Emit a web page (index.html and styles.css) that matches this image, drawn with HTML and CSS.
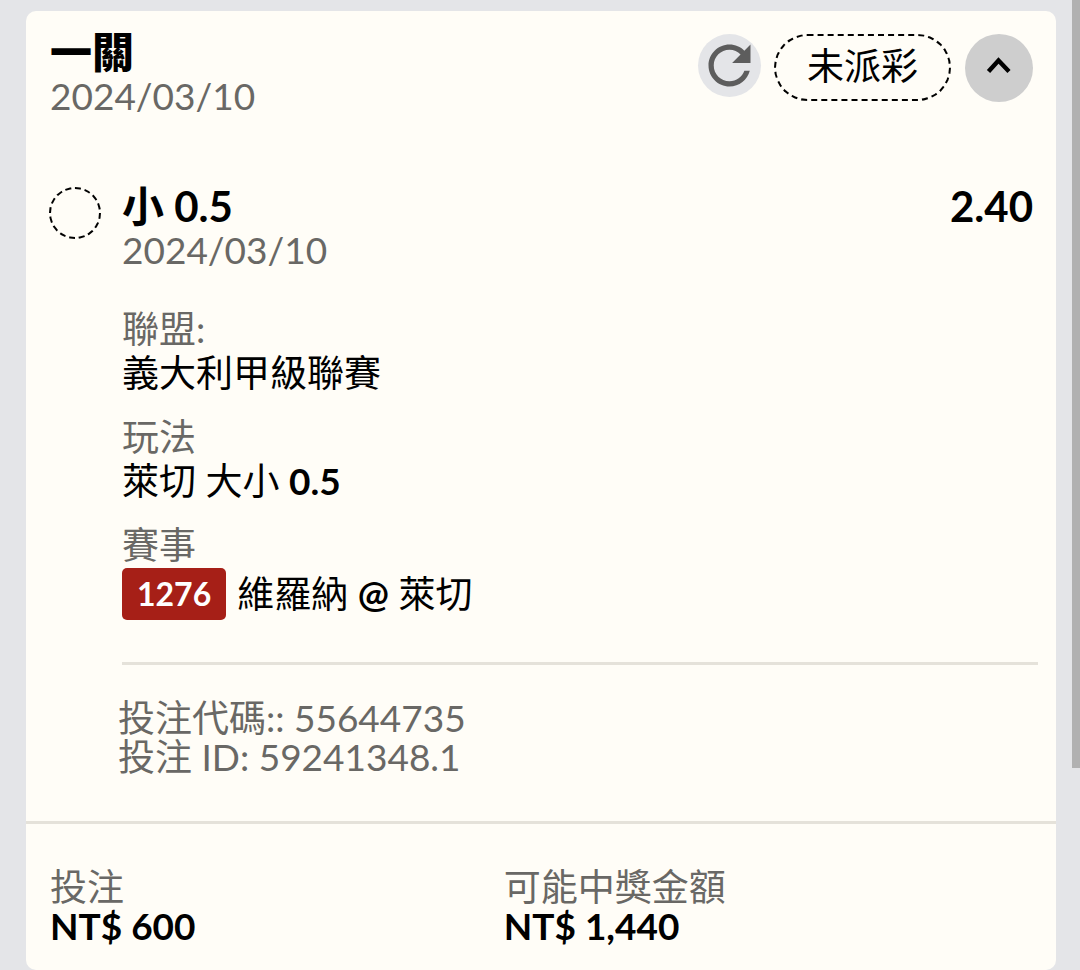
FILE: index.html
```html
<!DOCTYPE html>
<html lang="zh-Hant">
<head>
<meta charset="utf-8">
<meta name="viewport" content="width=device-width, initial-scale=1">
<title>一關</title>
<link rel="stylesheet" href="styles.css">
</head>
<body>
<main class="page">
  <article class="card">
    <header class="card-header">
      <div>
        <h1 class="card-title">一關</h1>
        <time class="date" datetime="2024-03-10">2024/03/10</time>
      </div>
      <div class="actions">
        <button class="refresh" type="button" aria-label="重新整理">
          <svg viewBox="0 0 24 24" width="63" height="63" aria-hidden="true">
            <path fill="#5d5d5d" d="M17.65 6.35C16.2 4.9 14.21 4 12 4c-4.42 0-7.99 3.58-7.99 8s3.57 8 7.99 8c3.73 0 6.84-2.55 7.73-6h-2.08c-.82 2.33-3.04 4-5.65 4-3.31 0-6-2.69-6-6s2.69-6 6-6c1.66 0 3.14.69 4.22 1.78L13 11h7V4l-2.35 2.35z"/>
          </svg>
        </button>
        <span class="status">未派彩</span>
        <button class="toggle" type="button" aria-label="收合" aria-expanded="true">
          <svg viewBox="0 0 68 68" width="68" height="68" aria-hidden="true">
            <path d="M23.5 37.5L33.5 26.5L44 37.5" fill="none" stroke="#000" stroke-width="4.4"/>
          </svg>
        </button>
      </div>
    </header>
    <section class="bet">
      <span class="marker"></span>
      <div class="bet-body">
        <div class="pick"><h2>小 0.5</h2><strong>2.40</strong></div>
        <time class="date" datetime="2024-03-10">2024/03/10</time>
        <dl class="details">
          <div><dt>聯盟:</dt><dd>義大利甲級聯賽</dd></div>
          <div><dt>玩法</dt><dd>萊切 大小 <b>0.5</b></dd></div>
          <div><dt>賽事</dt><dd class="match"><span class="badge">1276</span><span>維羅納 <b>@</b> 萊切</span></dd></div>
        </dl>
        <div class="codes">
          <p>投注代碼:: 55644735</p>
          <p>投注 ID: 59241348.1</p>
        </div>
      </div>
    </section>
    <dl class="totals">
      <div><dt>投注</dt><dd>NT$ 600</dd></div>
      <div><dt>可能中獎金額</dt><dd>NT$ 1,440</dd></div>
    </dl>
  </article>
</main>
<div class="scroll-thumb"></div>
</body>
</html>
```
FILE: styles.css
```css
* { box-sizing: border-box; }
body, h1, h2, p, dl, dd { margin: 0; }
body {
  background: #e4e5e8;
  color: #000;
  font-family: Lato, "Noto Sans CJK TC", sans-serif;
  font-size: 37px;
  line-height: 40px;
}
.page { padding: 11px 24px 0 26px; }
.card {
  background: #fffdf7;
  border-radius: 10px;
}
.card-header {
  display: flex;
  justify-content: space-between;
  align-items: flex-start;
  padding: 19px 23px 0 24px;
}
.card-title {
  margin-bottom: 2px;
  font-size: 42px;
  line-height: 44px;
  font-weight: 900;
}
.date { display: block; color: #696865; }
.actions {
  display: flex;
  align-items: flex-start;
  padding-top: 4px;
}
.refresh, .toggle {
  display: block;
  padding: 0;
  border: 0;
  border-radius: 50%;
  cursor: pointer;
}
.refresh { background: #e4e5e8; }
.toggle { background: #cecece; }
.refresh svg, .toggle svg { display: block; }
.status {
  margin: 0 14px 0 13px;
  padding: 10px 31px 14px;
  border: 2px dashed #000;
  border-radius: 34px;
  line-height: 39px;
}
.bet {
  display: flex;
  gap: 21px;
  padding: 68px 18px 45px 23px;
}
.marker {
  flex: none;
  width: 52px;
  height: 52px;
  margin-top: 3px;
  border: 2px dashed #000;
  border-radius: 50%;
}
.bet-body { flex: 1; }
.pick {
  display: flex;
  justify-content: space-between;
  margin-bottom: 2px;
  padding-right: 5px;
  font-size: 42px;
  line-height: 44px;
}
.pick h2, .pick strong { font-size: inherit; font-weight: 700; }
.details {
  display: grid;
  gap: 20px;
  padding: 37px 0 42px;
  border-bottom: 3px solid #e5e2da;
}
.details dt, .totals dt, .codes { color: #696865; }
.details dt, .details dd { line-height: 44px; }
.match {
  display: flex;
  align-items: center;
  gap: 11px;
  margin-top: 1px;
}
.badge {
  padding: 0 15px;
  border-radius: 5px;
  background: #a61f17;
  color: #fff;
  font-size: 32px;
  line-height: 52px;
  font-weight: 700;
}
.codes {
  margin-left: -4px;
  padding-top: 33px;
  line-height: 39px;
}
.totals {
  display: grid;
  grid-template-columns: 46% 1fr;
  column-gap: 2px;
  padding: 43px 24px 25px;
  border-top: 3px solid #e5e2da;
  line-height: 39px;
}
.totals dd, .details b { font-weight: 700; }
.scroll-thumb {
  position: fixed;
  top: 0;
  right: 0;
  width: 8px;
  height: calc(100vh - 202px);
  background: #b1b1b1;
}
```
